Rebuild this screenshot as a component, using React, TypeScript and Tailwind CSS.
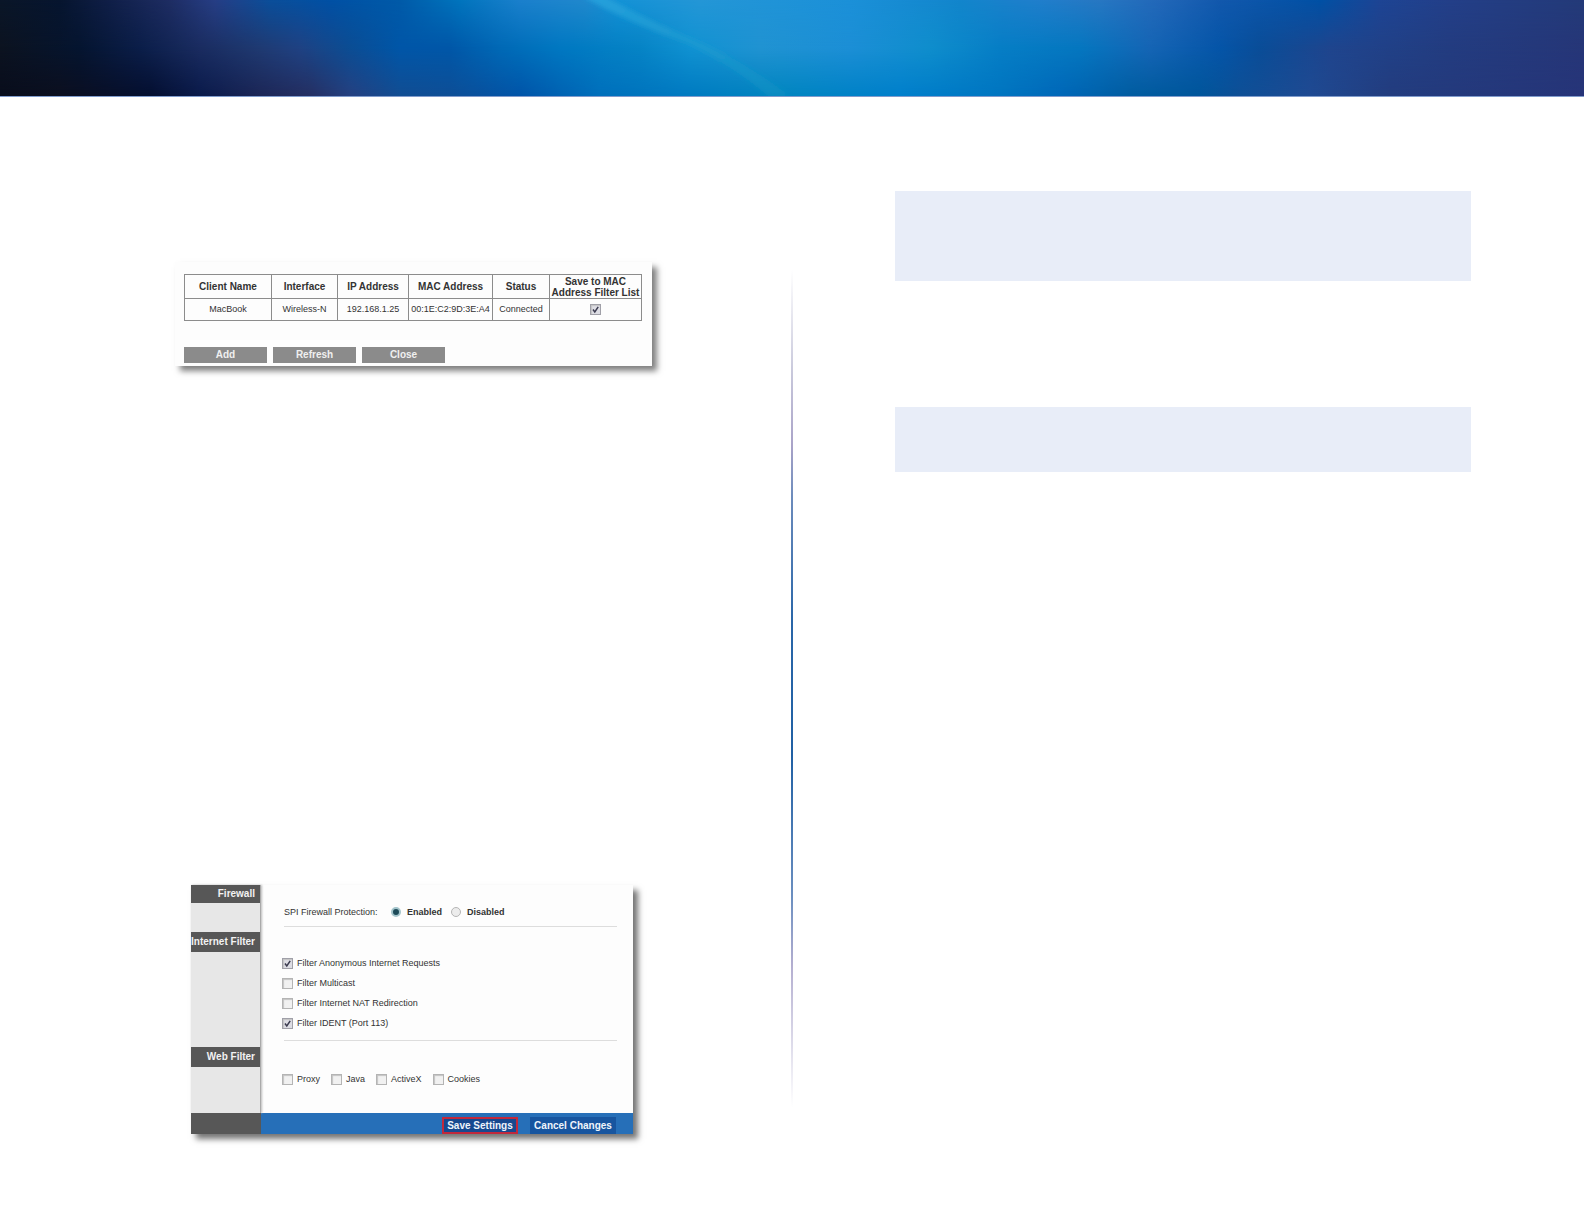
import React from "react";

type Stop = [number, string];

const TOP: Stop[] = [
  [0, "#0a1628"], [60, "#06152f"], [110, "#101f48"], [170, "#1e2d63"], [215, "#263e85"],
  [270, "#0a4e9a"], [330, "#0050a4"], [400, "#005aa8"], [460, "#0074bd"], [520, "#1a80cc"],
  [585, "#2088cc"], [620, "#1492d6"], [700, "#2496d6"], [850, "#1b90d8"], [960, "#1285cb"],
  [1040, "#207ecb"], [1100, "#2777c2"], [1160, "#2267b8"], [1220, "#1258ac"], [1320, "#0050a4"],
  [1380, "#1d4494"], [1450, "#233f88"], [1584, "#233a78"],
];

const MIDDLE: Stop[] = [
  [0, "#0c1320"], [80, "#051530"], [140, "#0b1e49"], [200, "#1a2c60"], [260, "#1f3a72"],
  [300, "#1f4283"], [350, "#0b4d94"], [400, "#0056a8"], [450, "#0057a8"], [500, "#0069b6"],
  [560, "#0078c2"], [640, "#0684c6"], [690, "#1092d2"], [760, "#2093d2"], [850, "#1c8fd6"],
  [930, "#0f8ecd"], [1000, "#067ec6"], [1080, "#0577c0"], [1150, "#1565b5"], [1220, "#0555a8"],
  [1260, "#0a4d98"], [1330, "#1f458e"], [1450, "#233c80"], [1584, "#263678"],
];

const BOTTOM: Stop[] = [
  [0, "#080d1c"], [60, "#0c0f1f"], [150, "#040f30"], [200, "#0a1a4a"], [260, "#1c2656"],
  [310, "#252f62"], [350, "#254080"], [400, "#114d92"], [450, "#0d4e96"], [520, "#0054a8"],
  [600, "#006fbb"], [680, "#0079c0"], [780, "#0085bf"], [900, "#007fcb"], [1000, "#0075c0"],
  [1060, "#0067b8"], [1130, "#005ca0"], [1200, "#00559a"], [1240, "#0e4f96"], [1310, "#1f4a92"],
  [1390, "#233c7e"], [1584, "#263478"],
];

function Ramp({ id, stops }: { id: string; stops: Stop[] }) {
  return (
    <linearGradient id={id} x1="0" x2="1" y1="0" y2="0">
      {stops.map(([x, color]) => (
        <stop key={x} offset={x / 1584} stopColor={color} />
      ))}
    </linearGradient>
  );
}

function Banner() {
  return (
    <header className="border-b border-[#7f9bcc] bg-[#0075c0]">
      <svg className="block h-[96px] w-full" viewBox="0 0 1584 97" preserveAspectRatio="none" aria-hidden="true">
        <defs>
          <Ramp id="ramp-top" stops={TOP} />
          <Ramp id="ramp-middle" stops={MIDDLE} />
          <Ramp id="ramp-bottom" stops={BOTTOM} />
          <linearGradient id="fade-top" x1="0" x2="0" y1="0" y2="1">
            <stop offset="0" stopColor="#fff" />
            <stop offset="0.5" stopColor="#fff" stopOpacity="0" />
          </linearGradient>
          <linearGradient id="fade-bottom" x1="0" x2="0" y1="0" y2="1">
            <stop offset="0.5" stopColor="#fff" stopOpacity="0" />
            <stop offset="1" stopColor="#fff" />
          </linearGradient>
          <mask id="mask-top"><rect width="1584" height="97" fill="url(#fade-top)" /></mask>
          <mask id="mask-bottom"><rect width="1584" height="97" fill="url(#fade-bottom)" /></mask>
          <linearGradient id="streak" x1="0" x2="1" y1="0" y2="1">
            <stop offset="0" stopColor="#27a3de" stopOpacity="0.9" />
            <stop offset="1" stopColor="#1597c4" stopOpacity="0.35" />
          </linearGradient>
          <filter id="soft" x="-20%" y="-20%" width="140%" height="140%"><feGaussianBlur stdDeviation="2" /></filter>
        </defs>
        <rect width="1584" height="97" fill="url(#ramp-middle)" />
        <rect width="1584" height="97" fill="url(#ramp-top)" mask="url(#mask-top)" />
        <rect width="1584" height="97" fill="url(#ramp-bottom)" mask="url(#mask-bottom)" />
        <path d="M582 -4 L604 -4 Q655 24 708 46 Q755 70 790 97 L768 97 Q735 68 690 45 Q630 24 582 -4Z" fill="url(#streak)" filter="url(#soft)" />
      </svg>
    </header>
  );
}

function CheckBox({ checked, label }: { checked?: boolean; label?: string }) {
  return (
    <span className="relative block size-[11px]">
      <input
        type="checkbox"
        aria-label={label}
        defaultChecked={checked}
        className="peer block size-[11px] appearance-none border border-[#b4b4b4] bg-[#f1f1f1] shadow-[inset_1px_1px_1px_#c4c4c4] checked:border-[#a0a0a8] checked:bg-[#dddde4]"
      />
      <svg
        viewBox="0 0 11 11"
        className="pointer-events-none absolute inset-0 hidden size-[11px] peer-checked:block"
        aria-hidden="true"
      >
        <path d="M3 5.5 L4.8 8 L8.2 2.8" fill="none" stroke="#3c3c50" strokeWidth="1.5" />
      </svg>
    </span>
  );
}

function Tick({ label, checked }: { label: string; checked?: boolean }) {
  return (
    <label className="flex items-center gap-1">
      <CheckBox checked={checked} />
      {label}
    </label>
  );
}

function Radio({ label, checked }: { label: string; checked?: boolean }) {
  return (
    <label className="flex items-center gap-1.5 font-bold">
      <input
        type="radio"
        name="spi"
        defaultChecked={checked}
        className="size-[10px] appearance-none rounded-full border border-[#b5b5b5] bg-[#ececec] checked:border-2 checked:border-[#a3c4cb] checked:bg-[#1c4a58]"
      />
      {label}
    </label>
  );
}

const CELL = "border border-[#8c8c8c] p-0 text-center";

function ClientTable() {
  return (
    <section className="w-[477px] bg-[#fdfdfd] pt-3 pr-[10px] pb-[3px] pl-[9px] shadow-[5px_5px_6px_rgba(0,0,0,0.5)]">
      <table className="w-full table-fixed border-collapse text-[10px] leading-[11px] text-[#333]">
        <colgroup>
          <col className="w-[87px]" />
          <col className="w-[66px]" />
          <col className="w-[71px]" />
          <col className="w-[84px]" />
          <col className="w-[57px]" />
          <col />
        </colgroup>
        <thead>
          <tr className="h-6">
            <th className={CELL}>Client Name</th>
            <th className={CELL}>Interface</th>
            <th className={CELL}>IP Address</th>
            <th className={CELL}>MAC Address</th>
            <th className={CELL}>Status</th>
            <th className={CELL}>Save to MAC<br />Address Filter List</th>
          </tr>
        </thead>
        <tbody className="text-[9px]">
          <tr className="h-[22px]">
            <td className={CELL}>MacBook</td>
            <td className={CELL}>Wireless-N</td>
            <td className={CELL}>192.168.1.25</td>
            <td className={CELL}>00:1E:C2:9D:3E:A4</td>
            <td className={CELL}>Connected</td>
            <td className={CELL}>
              <div className="flex justify-center">
                <CheckBox label="Save to MAC Address Filter List" checked />
              </div>
            </td>
          </tr>
        </tbody>
      </table>
      <div className="mt-[26px] flex gap-1.5 text-[10px] leading-4 font-bold text-[#f0f0f0]">
        <button className="h-4 w-[83px] bg-[#8b8b8b]">Add</button>
        <button className="h-4 w-[83px] bg-[#8b8b8b]">Refresh</button>
        <button className="h-4 w-[83px] bg-[#8b8b8b]">Close</button>
      </div>
    </section>
  );
}

const HEADING = "bg-[#575757] pr-[5px] text-right text-[10px] font-bold whitespace-nowrap text-[#f2f2f2]";

function FirewallPanel() {
  return (
    <section className="w-[442px] bg-[#fdfdfd] text-[9px] leading-3 text-[#333] shadow-[5px_5px_6px_rgba(0,0,0,0.55)]">
      <div className="flex h-[228px]">
        <div className="flex w-[70px] flex-col border-r border-[#aaa] bg-[#e7e7e7] shadow-[1px_0_2px_#bbb]">
          <h2 className={`${HEADING} h-[18px] leading-[18px]`}>Firewall</h2>
          <h2 className={`${HEADING} mt-[29px] h-5 leading-5`}>Internet Filter</h2>
          <h2 className={`${HEADING} mt-[95px] h-5 leading-5`}>Web Filter</h2>
        </div>
        <div className="flex-1 pt-[21px] pr-4 pl-[21px]">
          <div className="ml-[2px] flex items-center border-b border-[#ddd] pb-2">
            <span className="w-[107px]">SPI Firewall Protection:</span>
            <div className="flex gap-[9px]">
              <Radio label="Enabled" checked />
              <Radio label="Disabled" />
            </div>
          </div>
          <div className="mt-[30px] flex flex-col gap-2">
            <Tick label="Filter Anonymous Internet Requests" checked />
            <Tick label="Filter Multicast" />
            <Tick label="Filter Internet NAT Redirection" />
            <Tick label="Filter IDENT (Port 113)" checked />
          </div>
          <hr className="mt-[11px] ml-[2px] border-[#ddd]" />
          <div className="mt-8 flex gap-[11px]">
            <Tick label="Proxy" />
            <Tick label="Java" />
            <Tick label="ActiveX" />
            <Tick label="Cookies" />
          </div>
        </div>
      </div>
      <div className="flex h-[21px] bg-[#266fb8]">
        <div className="w-[70px] bg-[#575757]" />
        <div className="flex flex-1 items-end justify-end gap-3 pr-[17px] text-[10px] font-bold text-[#eef4fb]">
          <button className="h-[17px] w-[76px] border-2 border-[#c1283b] bg-[#17498f] leading-[13px] whitespace-nowrap">Save Settings</button>
          <button className="h-[17px] w-[86px] bg-[#17559f] leading-[17px] whitespace-nowrap">Cancel Changes</button>
        </div>
      </div>
    </section>
  );
}

export default function App() {
  return (
    <div className="min-h-screen bg-white font-['Liberation_Sans',Arial,sans-serif]">
      <Banner />
      <main className="grid grid-cols-2">
        <div className="flex flex-col pt-[165px] pb-[90px] pl-[175px]">
          <ClientTable />
          <div className="mt-[519px] pl-4">
            <FirewallPanel />
          </div>
        </div>
        <div className="flex">
          <div className="mt-[173px] mb-[117px] w-0.5 shrink-0 -translate-x-1/2 bg-[linear-gradient(to_bottom,#ffffff_0%,#c9c9dc_12%,#a9a3c8_21%,#6d8cbc_27%,#2a66a8_42%,#2060a4_58%,#6c8fc0_75%,#b3aed0_83%,#ffffff_100%)]" />
          <div className="flex-1 pt-[94px] pr-[113px] pl-[101px]">
            <aside className="h-[90px] bg-[#e8edf8]" />
            <aside className="mt-[126px] h-[65px] bg-[#e8edf8]" />
          </div>
        </div>
      </main>
    </div>
  );
}
